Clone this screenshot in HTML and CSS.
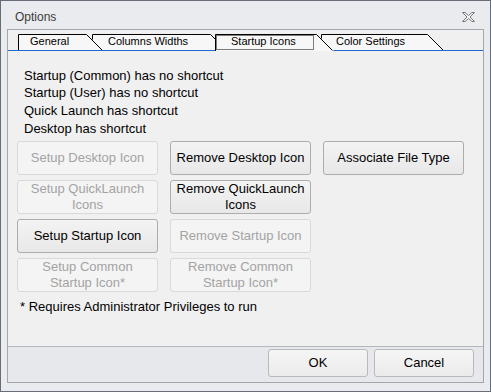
FILE: index.html
```html
<!DOCTYPE html>
<html lang="en">
<head>
    <meta charset="UTF-8">
    <meta name="viewport" content="width=device-width, initial-scale=1.0">
    <title>Options</title>
    <link rel="stylesheet" href="styles.css">
</head>
<body>
    <div class="janela">
        <!-- Title bar -->
        <div class="titulo">
            <span class="titulo-texto">Options</span>
            <svg class="fechar" width="13" height="10" viewBox="0 0 13 10">
                <path d="M0.5 0.5 H3 L6.5 3.5 L10 0.5 H12.5 L8 5 L12.5 9.5 H10 L6.5 6.5 L3 9.5 H0.5 L5 5 Z" fill="#f7f7f7" stroke="#777" stroke-width="1"/>
            </svg>
        </div>

        <div class="moldura">
            <div class="conteudo">
                <!-- Tabs -->
                <div class="abas">
                    <svg class="abas-linhas" width="475" height="17" viewBox="0 0 475 17">
                        <polygon points="313,0 420,0 436,16 313,16" fill="#f7f7f7"/>
                        <polyline points="313.5,17 313.5,0.5 419.5,0.5 435.5,16.5" fill="none" stroke="#000"/>
                        <polygon points="84,0 203,0 219,16 84,16" fill="#f7f7f7"/>
                        <polyline points="84.5,17 84.5,0.5 202.5,0.5 218.5,16.5" fill="none" stroke="#000"/>
                        <polygon points="10,0 79,0 95,16 10,16" fill="#f7f7f7"/>
                        <polyline points="10.5,17 10.5,0.5 78.5,0.5 94.5,16.5" fill="none" stroke="#000"/>
                        <line x1="0" y1="16.5" x2="475" y2="16.5" stroke="#1f6ad0"/>
                        <polygon points="207,0 309,0 326,17 207,17" fill="#f7f7f7"/>
                        <polyline points="207.5,17 207.5,0.5 308.5,0.5 324.5,16.5" fill="none" stroke="#000"/>
                        <rect x="208.5" y="1.5" width="97" height="14" fill="none" stroke="#000" stroke-dasharray="1 1"/>
                    </svg>
                    <span class="aba aba-geral">General</span>
                    <span class="aba aba-colunas">Columns Widths</span>
                    <span class="aba aba-startup">Startup Icons</span>
                    <span class="aba">Color Settings</span>
                </div>

                <!-- Shortcut status -->
                <div class="status">
                    <p>Startup (Common) has no shortcut</p>
                    <p>Startup (User) has no shortcut</p>
                    <p>Quick Launch has shortcut</p>
                    <p>Desktop has shortcut</p>
                </div>

                <!-- Actions -->
                <div class="botoes">
                    <button class="botao" disabled>Setup Desktop Icon</button>
                    <button class="botao">Remove Desktop Icon</button>
                    <button class="botao">Associate File Type</button>
                    <button class="botao primeira-coluna" disabled>Setup QuickLaunch<br>Icons</button>
                    <button class="botao">Remove QuickLaunch<br>Icons</button>
                    <button class="botao primeira-coluna">Setup Startup Icon</button>
                    <button class="botao" disabled>Remove Startup Icon</button>
                    <button class="botao primeira-coluna" disabled>Setup Common<br>Startup Icon*</button>
                    <button class="botao" disabled>Remove Common<br>Startup Icon*</button>
                </div>

                <p class="nota">* Requires Administrator Privileges to run</p>
            </div>

            <!-- Dialog buttons -->
            <div class="rodape">
                <button class="botao botao-rodape">OK</button>
                <button class="botao botao-rodape">Cancel</button>
            </div>
        </div>
    </div>
</body>
</html>
```

FILE: styles.css
```css
* {
    margin: 0;
    padding: 0;
    box-sizing: border-box;
}

body {
    font-family: 'Liberation Sans', Arial, sans-serif;
    font-size: 13px;
    color: #000;
    background-color: #e9ebee;
}

.janela {
    width: 491px;
    height: 392px;
    border: 1px solid #666d76;
    background-color: #e9ebee;
    padding: 0 6px 8px 6px;
    display: flex;
    flex-direction: column;
}

.titulo {
    height: 28px;
    margin: 0 -6px;
    padding: 3px 15px 0 14px;
    display: flex;
    align-items: center;
    justify-content: space-between;
}

.titulo-texto {
    font-size: 12px;
    color: #3b3b3b;
}

.fechar {
    display: block;
}

.moldura {
    height: 354px;
    border: 1px solid #a3a6aa;
    display: flex;
    flex-direction: column;
}

.conteudo {
    flex: 1;
    background-color: #f0f0f0;
    padding-top: 4px;
}

.abas {
    position: relative;
    height: 17px;
    display: flex;
    font-size: 11px;
    line-height: 15px;
    padding-left: 22px;
}

.abas-linhas {
    position: absolute;
    left: 0;
    top: 0;
}

.aba {
    position: relative;
    white-space: nowrap;
}

.aba-geral {
    width: 78px;
}

.aba-colunas {
    width: 123px;
}

.aba-startup {
    width: 105px;
}

.status {
    margin-top: 15.5px;
    padding-left: 16px;
    line-height: 17.7px;
}

.botoes {
    margin-top: 3.5px;
    padding-left: 9px;
    display: grid;
    grid-template-columns: repeat(3, 141px);
    grid-auto-rows: 34px;
    column-gap: 12px;
    row-gap: 5px;
}

.primeira-coluna {
    grid-column: 1;
}

.botao {
    font-family: inherit;
    font-size: 13px;
    line-height: 16px;
    color: #000;
    border: 1px solid #adadad;
    border-radius: 3px;
    background: linear-gradient(#f3f3f3, #e8e8e8);
}

.botao:disabled {
    color: #a3a3a3;
    border-color: #d9d9d9;
    background: #f4f4f4;
}

.nota {
    margin-top: 6px;
    padding-left: 12px;
    line-height: 17.7px;
}

.rodape {
    height: 36px;
    border-top: 1px solid #b4b8be;
    background-color: #e6e8ec;
    display: flex;
    justify-content: flex-end;
    align-items: flex-start;
    gap: 6px;
    padding: 2px 9px 0 0;
}

.botao-rodape {
    width: 100px;
    height: 28px;
    border-color: #b9b9b9;
    background: linear-gradient(#f5f5f5, #ebebeb);
}
```
